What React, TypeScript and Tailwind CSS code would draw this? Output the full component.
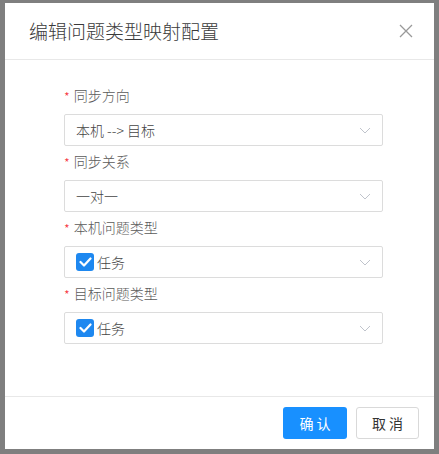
import React from "react";

const font = { fontFamily: '"Noto Sans CJK SC", "Noto Sans", sans-serif' };

function Chevron() {
  return (
    <svg width="12" height="7" viewBox="0 0 12 7" fill="none" className="shrink-0">
      <path d="M1 1l5 5 5-5" stroke="#c0c4cc" strokeWidth="1" />
    </svg>
  );
}

function Check() {
  return (
    <span className="w-[18px] h-[18px] rounded-[3px] bg-[#1e88f0] flex items-center justify-center shrink-0">
      <svg width="13" height="10" viewBox="0 0 13 10" fill="none">
        <path d="M1.5 5l3.5 3.5 6.5-7" stroke="#fff" strokeWidth="2.2" strokeLinecap="round" strokeLinejoin="round" />
      </svg>
    </span>
  );
}

function Field({ label, children }: { label: string; children: React.ReactNode }) {
  return (
    <div className="flex flex-col">
      <div className="h-[22px] flex items-center text-[14px] text-[#5a5a5a] font-light">
        <span className="text-[#f5222d] mr-[4px] text-[13px] leading-none mt-[2px]">*</span>
        <span>{label}</span>
      </div>
      <div className="mt-[8px] h-[32px] border border-[#dcdcdc] rounded-[2px] flex items-center pl-[11px] pr-[11px]">
        <div className="flex-1 flex items-center text-[14px] text-[#444] font-light">{children}</div>
        <Chevron />
      </div>
    </div>
  );
}

export default function App() {
  return (
    <div className="w-[439px] h-[454px] bg-[#7f7f7f] pt-[3px] pl-[5px] overflow-hidden" style={font}>
      <div className="w-[429px] h-[446px] bg-white flex flex-col">
        <div className="h-[57px] border-b border-[#e8e8e8] flex items-center justify-between pl-[24px] pr-[21px]">
          <span className="text-[19px] text-[#3a3a3a] font-light">编辑问题类型映射配置</span>
          <svg width="14" height="14" viewBox="0 0 14 14" fill="none">
            <path d="M1 1l12 12M13 1L1 13" stroke="#999" strokeWidth="1.3" />
          </svg>
        </div>
        <div className="flex-1 pt-[24px] pl-[59px] pr-[51px] flex flex-col gap-[4px]">
          <Field label="同步方向">本机 --&gt; 目标</Field>
          <Field label="同步关系">一对一</Field>
          <Field label="本机问题类型">
            <Check />
            <span className="ml-[3px]">任务</span>
          </Field>
          <Field label="目标问题类型">
            <Check />
            <span className="ml-[3px]">任务</span>
          </Field>
        </div>
        <div className="h-[53px] border-t border-[#e8e8e8] flex items-center justify-end gap-[9px] pr-[15px]">
          <button className="w-[64px] h-[32px] rounded-[3px] bg-[#1890ff] text-white text-[14px]">确 认</button>
          <button className="w-[63px] h-[32px] rounded-[3px] border border-[#d9d9d9] bg-white text-[#333] text-[14px]">取 消</button>
        </div>
      </div>
    </div>
  );
}
